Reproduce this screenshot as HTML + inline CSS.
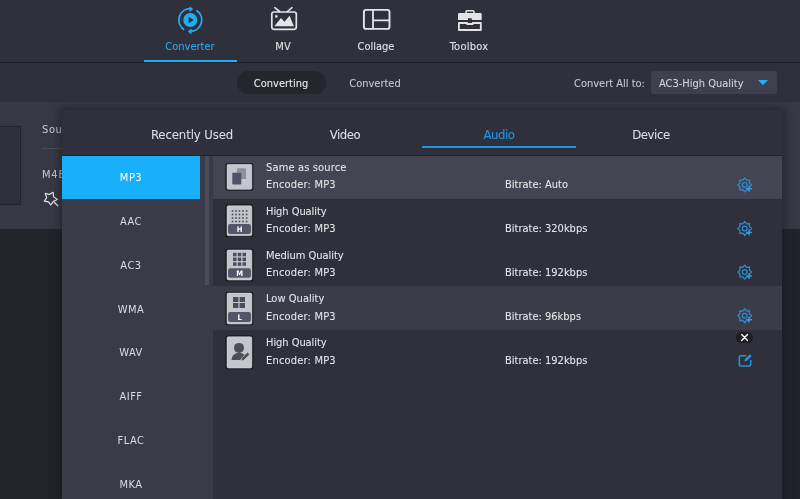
<!DOCTYPE html>
<html lang="en">
<head>
<meta charset="utf-8">
<title>Converter</title>
<style>
html,body{margin:0;padding:0;}
body{width:800px;height:499px;overflow:hidden;background:#30303c;font-family:"DejaVu Sans Condensed","DejaVu Sans","Liberation Sans",sans-serif;font-size:11px;color:#dcdce2;position:relative;}
.abs{position:absolute;}
.t{-webkit-text-stroke:0.07px currentColor;position:absolute;white-space:nowrap;line-height:13px;height:13px;will-change:transform;}
.c{transform:translateX(-50%);}
#nav{left:0;top:0;width:800px;height:62px;background:#30303c;}
#navline{left:0;top:62px;width:800px;height:1px;background:#1f1f27;}
#sub{left:0;top:63px;width:800px;height:39px;background:#30303c;}
#content{left:0;top:102px;width:800px;height:127px;background:#383844;}
#bottom{left:0;top:229px;width:800px;height:270px;background:#22222b;}
#popup{left:62px;top:110px;width:720px;height:389px;background:#30303c;box-shadow:0 0 8px 2px rgba(20,20,26,0.55);}
#list{left:0;top:46px;width:151px;height:343px;background:#3a3a48;}
.li{letter-spacing:0.5px;will-change:transform;position:absolute;left:0;width:138px;text-align:center;line-height:13px;height:13px;color:#dcdce2;}
.row{position:absolute;left:151px;width:569px;}
.ico{position:absolute;left:163px;width:26px;border:1px solid #15151b;border-radius:2px;background:#c4c4cc;box-shadow:inset 0 0 0 1px #d4d4dc;}
.lbl{position:absolute;left:2px;width:22px;height:10px;border-radius:2px;background:#56566a;color:#fff;font:bold 8px/10px "DejaVu Sans Condensed","Liberation Sans",sans-serif;text-align:center;}
</style>
</head>
<body>
<div id="nav" class="abs"></div>
<div id="navline" class="abs"></div>
<div id="sub" class="abs"></div>
<div id="content" class="abs"></div>
<div id="bottom" class="abs"></div>

<!-- top nav -->
<svg class="abs" style="left:170px;top:0" width="40" height="40" viewBox="170 0 40 40">
  <circle cx="190.3" cy="20" r="7" fill="#22aef5"/>
  <path d="M188.6 16.7 L193.7 20.1 L188.6 23.6 Z" fill="#30303c"/>
  <path d="M190.6 8.6 A11.5 11.5 0 0 0 183.6 29.4" fill="none" stroke="#22aef5" stroke-width="1.8" stroke-linecap="round"/>
  <path d="M189.8 6.9 L192.9 9.1 L189.8 11.5 Z" fill="#22aef5" stroke="#22aef5" stroke-width="0.6" stroke-linejoin="round"/>
  <path d="M190.2 31.5 A11.5 11.5 0 0 0 197 10.7" fill="none" stroke="#22aef5" stroke-width="1.8" stroke-linecap="round"/>
  <path d="M191.2 29.1 L188.1 31.4 L191.2 33.7 Z" fill="#22aef5" stroke="#22aef5" stroke-width="0.6" stroke-linejoin="round"/>
</svg>
<div class="t c" style="left:189.8px;top:39.5px;color:#22aef5">Converter</div>
<div class="abs" style="left:144px;top:60px;width:93px;height:2px;background:#22aef5"></div>

<svg class="abs" style="left:265px;top:0" width="40" height="40" viewBox="265 0 40 40">
  <rect x="271.8" y="12" width="24.5" height="17.3" rx="2.2" fill="none" stroke="#e4e4e8" stroke-width="1.7"/>
  <path d="M274.8 7.7 L279.6 11.5 M292 7.7 L287.4 11.5" stroke="#e4e4e8" stroke-width="1.6" stroke-linecap="round"/>
  <path d="M274.3 26.2 L281 18 L284.5 21.8 L289.6 15.8 L293.9 26.2 Z" fill="#e4e4e8"/>
  <circle cx="276.3" cy="16.4" r="1.3" fill="#e4e4e8"/>
</svg>
<div class="t c" style="left:282.5px;top:39.5px;color:#e4e4e8">MV</div>

<svg class="abs" style="left:356px;top:0" width="40" height="40" viewBox="356 0 40 40">
  <rect x="363.9" y="9.9" width="25.6" height="19" rx="2.2" fill="none" stroke="#e4e4e8" stroke-width="1.9"/>
  <path d="M373 10 V29 M373 20.3 H389.5" stroke="#e4e4e8" stroke-width="1.8" fill="none"/>
</svg>
<div class="t c" style="left:376.3px;top:39.5px;color:#e4e4e8">Collage</div>

<svg class="abs" style="left:450px;top:0" width="40" height="40" viewBox="450 0 40 40">
  <path d="M466.1 13.2 V11.6 Q466.1 10.7 467 10.7 H473 Q473.9 10.7 473.9 11.6 V13.2" fill="none" stroke="#e4e4e8" stroke-width="1.6"/>
  <path d="M458 14.2 Q458 13 459.2 13 H480.5 Q481.7 13 481.7 14.2 V19.9 H471.8 V18.2 H468 V19.9 H458 Z" fill="#e4e4e8"/>
  <path d="M458.9 23 H467.1 V24 H472.8 V23 H480.8 V30 H458.9 Z" fill="none" stroke="#e4e4e8" stroke-width="1.8" stroke-linejoin="round"/>
</svg>
<div class="t c" style="left:469px;top:39.5px;letter-spacing:0.25px;color:#e4e4e8">Toolbox</div>

<!-- sub bar -->
<div class="abs" style="left:237px;top:71px;width:89px;height:23px;border-radius:12px;background:#25252e"></div>
<div class="t c" style="left:281px;top:76.5px;color:#ececf0">Converting</div>
<div class="t c" style="left:374.5px;top:76.5px;color:#c9c9d0">Converted</div>
<div class="t" style="left:574px;top:76.5px;color:#c9c9d0">Convert All to:</div>
<div class="abs" style="left:651px;top:71px;width:126px;height:23px;border-radius:3px;background:#3f3f4d"></div>
<div class="t" style="left:659px;top:76.5px;color:#d6d6dc">AC3-High Quality</div>
<svg class="abs" style="left:756px;top:78px" width="14" height="9" viewBox="756 78 14 9"><path d="M758 80 H768 L763 85.2 Z" fill="#22aef5"/></svg>

<!-- content left -->
<div class="abs" style="left:-1px;top:126px;width:20px;height:77px;border:1px solid #24242c;background:#30303c"></div>
<div class="t" style="left:42px;top:122.5px;color:#c4c4cc;letter-spacing:0.6px">Source</div>
<div class="abs" style="left:42px;top:148px;width:40px;height:1px;background:#4c4c5a"></div>
<div class="t" style="left:42px;top:167.5px;color:#c4c4cc;letter-spacing:0.8px">M4B</div>
<svg class="abs" style="left:40px;top:188px" width="22" height="22" viewBox="40 188 22 22">
  <path d="M45.3 193.3 L49.2 194.6 L53.1 192.3 L53.6 196.9 L57.4 199.5 L53.1 201.6 L50.8 205 L48.4 201.9 L44.3 201.1 L46.6 197.7 Z" fill="none" stroke="#e6e6ea" stroke-width="1.15" stroke-linejoin="round"/>
  <path d="M54.2 202.2 L57.8 205.8" stroke="#e6e6ea" stroke-width="1.3" stroke-linecap="round"/>
</svg>

<!-- popup -->
<div id="popup" class="abs">
  <div class="t c" style="left:130px;top:17px;font-size:13px;line-height:16px;height:16px;letter-spacing:-0.1px;color:#dedee4">Recently Used</div>
  <div class="t c" style="left:283px;top:17px;font-size:13px;line-height:16px;height:16px;letter-spacing:-0.4px;color:#dedee4">Video</div>
  <div class="t c" style="left:436.5px;top:17px;font-size:13px;line-height:16px;height:16px;letter-spacing:-0.4px;color:#2196e0">Audio</div>
  <div class="t c" style="left:589px;top:17px;font-size:13px;line-height:16px;height:16px;letter-spacing:-0.4px;color:#dedee4">Device</div>
  <div class="abs" style="left:360px;top:36px;width:154px;height:2px;background:#1e96dc"></div>
  <div class="abs" style="left:0;top:45px;width:720px;height:1px;background:#23232b"></div>

  <div id="list" class="abs">
    <div class="abs" style="left:0;top:0;width:138px;height:43px;background:#18b0fa"></div>
    <div class="abs" style="left:142.5px;top:0;width:4.5px;height:129px;background:#4b4b59"></div>
    <div class="li" style="top:15px;color:#fff">MP3</div>
    <div class="li" style="top:59px">AAC</div>
    <div class="li" style="top:103px">AC3</div>
    <div class="li" style="top:146.6px">WMA</div>
    <div class="li" style="top:190px">WAV</div>
    <div class="li" style="top:234px">AIFF</div>
    <div class="li" style="top:278px">FLAC</div>
    <div class="li" style="top:321.6px">MKA</div>
  </div>

  <!-- rows -->
  <div class="row" style="top:46px;height:43px;background:#444452"></div>
  <div class="row" style="top:176px;height:44px;background:#3c3c49"></div>

  <!-- row 1 -->
  <svg class="abs" style="left:163px;top:53px" width="30" height="36" viewBox="0 0 30 36"><g transform="translate(0.5 0.00)"><rect x="0" y="0" width="27.8" height="27.6" rx="2.6" fill="#0d0d12"/><rect x="1.5" y="1.25" width="24.9" height="25.10" rx="1.3" fill="#c5c5cd" stroke="#d3d3da" stroke-width="0.6"/><rect x="11.5" y="5.2" width="9" height="10.8" rx="0.8" fill="#8e8e9e"/><rect x="6.8" y="9.7" width="9" height="11.9" rx="0.8" fill="#525264"/></g></svg>
  <div class="t" style="left:203.6px;top:51px;letter-spacing:0.15px;color:#e6e6ea">Same as source</div>
  <div class="t" style="left:203.6px;top:68px;letter-spacing:0.19px;color:#e6e6ea">Encoder: MP3</div>
  <div class="t" style="left:443px;top:68px;color:#e6e6ea">Bitrate: Auto</div>

  <!-- row 2 -->
  <svg class="abs" style="left:163px;top:94px" width="30" height="36" viewBox="0 0 30 36"><g transform="translate(0.5 0.50)"><rect x="0" y="0" width="27.8" height="32.5" rx="2.6" fill="#0d0d12"/><rect x="1.5" y="1.25" width="24.9" height="30.00" rx="1.3" fill="#c5c5cd" stroke="#d3d3da" stroke-width="0.6"/><rect x="6.20" y="5.70" width="1.6" height="1.6" fill="#454556"/><rect x="9.70" y="5.70" width="1.6" height="1.6" fill="#454556"/><rect x="13.20" y="5.70" width="1.6" height="1.6" fill="#454556"/><rect x="16.70" y="5.70" width="1.6" height="1.6" fill="#454556"/><rect x="20.30" y="5.70" width="1.6" height="1.6" fill="#454556"/><rect x="6.20" y="9.20" width="1.6" height="1.6" fill="#454556"/><rect x="9.70" y="9.20" width="1.6" height="1.6" fill="#454556"/><rect x="13.20" y="9.20" width="1.6" height="1.6" fill="#454556"/><rect x="16.70" y="9.20" width="1.6" height="1.6" fill="#454556"/><rect x="20.30" y="9.20" width="1.6" height="1.6" fill="#454556"/><rect x="6.20" y="12.70" width="1.6" height="1.6" fill="#454556"/><rect x="9.70" y="12.70" width="1.6" height="1.6" fill="#454556"/><rect x="13.20" y="12.70" width="1.6" height="1.6" fill="#454556"/><rect x="16.70" y="12.70" width="1.6" height="1.6" fill="#454556"/><rect x="20.30" y="12.70" width="1.6" height="1.6" fill="#454556"/><rect x="6.20" y="16.20" width="1.6" height="1.6" fill="#454556"/><rect x="9.70" y="16.20" width="1.6" height="1.6" fill="#454556"/><rect x="13.20" y="16.20" width="1.6" height="1.6" fill="#454556"/><rect x="16.70" y="16.20" width="1.6" height="1.6" fill="#454556"/><rect x="20.30" y="16.20" width="1.6" height="1.6" fill="#454556"/><rect x="2.6" y="19.5" width="22.8" height="10" rx="2" fill="#55556a"/><text x="14.2" y="27.4" text-anchor="middle" font-family="'DejaVu Sans Condensed','Liberation Sans',sans-serif" font-weight="bold" font-size="7.6" fill="#ffffff">H</text></g></svg>
  <div class="t" style="left:203.6px;top:95px;letter-spacing:-0.05px;color:#e6e6ea">High Quality</div>
  <div class="t" style="left:203.6px;top:112px;letter-spacing:0.19px;color:#e6e6ea">Encoder: MP3</div>
  <div class="t" style="left:443px;top:112px;color:#e6e6ea">Bitrate: 320kbps</div>

  <!-- row 3 -->
  <svg class="abs" style="left:163px;top:138px" width="30" height="36" viewBox="0 0 30 36"><g transform="translate(0.5 0.70)"><rect x="0" y="0" width="27.8" height="32.6" rx="2.6" fill="#0d0d12"/><rect x="1.5" y="1.25" width="24.9" height="30.10" rx="1.3" fill="#c5c5cd" stroke="#d3d3da" stroke-width="0.6"/><rect x="7.5" y="4.1" width="3.5" height="3.5" fill="#4c4c5d"/><rect x="12.25" y="4.1" width="3.5" height="3.5" fill="#4c4c5d"/><rect x="17" y="4.1" width="3.5" height="3.5" fill="#4c4c5d"/><rect x="7.5" y="8.85" width="3.5" height="3.5" fill="#4c4c5d"/><rect x="12.25" y="8.85" width="3.5" height="3.5" fill="#4c4c5d"/><rect x="17" y="8.85" width="3.5" height="3.5" fill="#4c4c5d"/><rect x="7.5" y="13.6" width="3.5" height="3.5" fill="#4c4c5d"/><rect x="12.25" y="13.6" width="3.5" height="3.5" fill="#4c4c5d"/><rect x="17" y="13.6" width="3.5" height="3.5" fill="#4c4c5d"/><rect x="2.6" y="19.5" width="22.8" height="9.6" rx="2" fill="#55556a"/><text x="14.2" y="27.1" text-anchor="middle" font-family="'DejaVu Sans Condensed','Liberation Sans',sans-serif" font-weight="bold" font-size="7.6" fill="#ffffff">M</text></g></svg>
  <div class="t" style="left:203.6px;top:139px;letter-spacing:-0.03px;color:#e6e6ea">Medium Quality</div>
  <div class="t" style="left:203.6px;top:156px;letter-spacing:0.19px;color:#e6e6ea">Encoder: MP3</div>
  <div class="t" style="left:443px;top:156px;color:#e6e6ea">Bitrate: 192kbps</div>

  <!-- row 4 -->
  <svg class="abs" style="left:163px;top:181px" width="30" height="36" viewBox="0 0 30 36"><g transform="translate(0.5 0.80)"><rect x="0" y="0" width="27.8" height="33.5" rx="2.6" fill="#0d0d12"/><rect x="1.5" y="1.25" width="24.9" height="31.00" rx="1.3" fill="#c5c5cd" stroke="#d3d3da" stroke-width="0.6"/><rect x="7.5" y="5.2" width="5.4" height="5" fill="#4c4c5d"/><rect x="14.1" y="5.2" width="5.4" height="5" fill="#4c4c5d"/><rect x="7.5" y="11.2" width="5.4" height="5" fill="#4c4c5d"/><rect x="14.1" y="11.2" width="5.4" height="5" fill="#4c4c5d"/><rect x="2.6" y="20.2" width="22.8" height="9.9" rx="2" fill="#55556a"/><text x="14.2" y="28" text-anchor="middle" font-family="'DejaVu Sans Condensed','Liberation Sans',sans-serif" font-weight="bold" font-size="7.6" fill="#ffffff">L</text></g></svg>
  <div class="t" style="left:203.6px;top:182px;letter-spacing:0.04px;color:#e6e6ea">Low Quality</div>
  <div class="t" style="left:203.6px;top:200px;letter-spacing:0.19px;color:#e6e6ea">Encoder: MP3</div>
  <div class="t" style="left:443px;top:200px;color:#e6e6ea">Bitrate: 96kbps</div>

  <!-- row 5 -->
  <svg class="abs" style="left:163px;top:225px" width="30" height="36" viewBox="0 0 30 36"><g transform="translate(0.5 0.50)"><rect x="0" y="0" width="27.8" height="33.8" rx="2.6" fill="#0d0d12"/><rect x="1.5" y="1.25" width="24.9" height="31.30" rx="1.3" fill="#c5c5cd" stroke="#d3d3da" stroke-width="0.6"/><circle cx="13.5" cy="12.4" r="5" fill="#4d4d5e"/><path d="M6 24.4 C6.4 19 9.8 17.4 13.5 17.4 C16 17.4 18 18 19.3 19.6 L14.6 24.4 Z" fill="#4d4d5e"/><path d="M15.4 25.4 L16 22.6 L22 16.8 L24.2 19 L18.2 24.8 Z" fill="#4d4d5e" stroke="#c5c5cd" stroke-width="0.7"/></g></svg>
  <div class="t" style="left:203.6px;top:226px;letter-spacing:-0.05px;color:#e6e6ea">High Quality</div>
  <div class="t" style="left:203.6px;top:244px;letter-spacing:0.19px;color:#e6e6ea">Encoder: MP3</div>
  <div class="t" style="left:443px;top:244px;color:#e6e6ea">Bitrate: 192kbps</div>

  <!-- gear icons -->
  <svg class="abs" style="left:672px;top:64px" width="20" height="20" viewBox="-10.7 -10.9 20 20"><path d="M0 -7 L1.9 -4.7 L4.9 -4.9 L4.7 -1.9 L7 0 L4.7 1.9 L4.9 4.9 L1.9 4.7 L0 7 L-1.9 4.7 L-4.9 4.9 L-4.7 1.9 L-7 0 L-4.7 -1.9 L-4.9 -4.9 L-1.9 -4.7 Z" fill="none" stroke="#2a8fd6" stroke-width="1.2" stroke-linejoin="round"/>
      <circle cx="0" cy="0" r="2.4" fill="none" stroke="#2a8fd6" stroke-width="1.2"/>
      <path d="M1.4 3.8 H7.3 M4.35 0.9 V6.8" stroke="#379de2" stroke-width="1.2"/></svg>
  <svg class="abs" style="left:672px;top:108px" width="20" height="20" viewBox="-10.7 -10.5 20 20"><path d="M0 -7 L1.9 -4.7 L4.9 -4.9 L4.7 -1.9 L7 0 L4.7 1.9 L4.9 4.9 L1.9 4.7 L0 7 L-1.9 4.7 L-4.9 4.9 L-4.7 1.9 L-7 0 L-4.7 -1.9 L-4.9 -4.9 L-1.9 -4.7 Z" fill="none" stroke="#2a8fd6" stroke-width="1.2" stroke-linejoin="round"/>
      <circle cx="0" cy="0" r="2.4" fill="none" stroke="#2a8fd6" stroke-width="1.2"/>
      <path d="M1.4 3.8 H7.3 M4.35 0.9 V6.8" stroke="#379de2" stroke-width="1.2"/></svg>
  <svg class="abs" style="left:672px;top:152px" width="20" height="20" viewBox="-10.7 -10.1 20 20"><path d="M0 -7 L1.9 -4.7 L4.9 -4.9 L4.7 -1.9 L7 0 L4.7 1.9 L4.9 4.9 L1.9 4.7 L0 7 L-1.9 4.7 L-4.9 4.9 L-4.7 1.9 L-7 0 L-4.7 -1.9 L-4.9 -4.9 L-1.9 -4.7 Z" fill="none" stroke="#2a8fd6" stroke-width="1.2" stroke-linejoin="round"/>
      <circle cx="0" cy="0" r="2.4" fill="none" stroke="#2a8fd6" stroke-width="1.2"/>
      <path d="M1.4 3.8 H7.3 M4.35 0.9 V6.8" stroke="#379de2" stroke-width="1.2"/></svg>
  <svg class="abs" style="left:672px;top:195px" width="20" height="20" viewBox="-10.7 -10.75 20 20"><path d="M0 -7 L1.9 -4.7 L4.9 -4.9 L4.7 -1.9 L7 0 L4.7 1.9 L4.9 4.9 L1.9 4.7 L0 7 L-1.9 4.7 L-4.9 4.9 L-4.7 1.9 L-7 0 L-4.7 -1.9 L-4.9 -4.9 L-1.9 -4.7 Z" fill="none" stroke="#2a8fd6" stroke-width="1.2" stroke-linejoin="round"/>
      <circle cx="0" cy="0" r="2.4" fill="none" stroke="#2a8fd6" stroke-width="1.2"/>
      <path d="M1.4 3.8 H7.3 M4.35 0.9 V6.8" stroke="#379de2" stroke-width="1.2"/></svg>

  <!-- close pill + edit -->
  <div class="abs" style="left:674px;top:222px;width:17px;height:11px;border-radius:6px;background:#1d1d23"></div>
  <svg class="abs" style="left:674px;top:222px" width="17" height="11" viewBox="0 0 17 11"><path d="M5.7 2.6 L11.5 8.4 M11.5 2.6 L5.7 8.4" stroke="#fff" stroke-width="1.4" stroke-linecap="round"/></svg>
  <svg class="abs" style="left:674px;top:240px" width="20" height="20" viewBox="736 350 20 20">
    <path d="M745.6 355.7 H741 Q739.3 355.7 739.3 357.4 V364.3 Q739.3 366 741 366 H749 Q750.7 366 750.7 364.3 V360.5" fill="none" stroke="#2a90d4" stroke-width="1.6" stroke-linecap="round"/>
    <path d="M744.3 361.5 L744.9 359.1 L749.8 354.2 L751.7 356.1 L746.7 360.9 Z" fill="#2a90d4"/>
  </svg>
</div>


</body>
</html>
